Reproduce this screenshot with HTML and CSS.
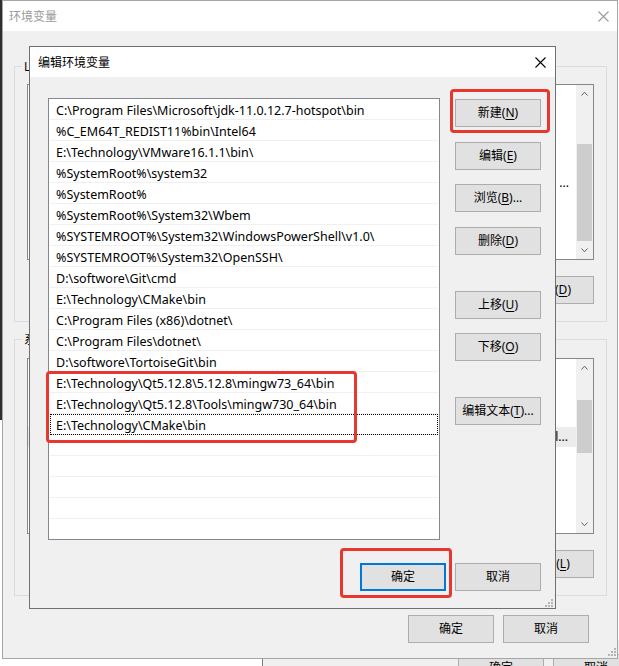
FILE: index.html
```html
<!DOCTYPE html>
<html lang="zh-CN">
<head>
<meta charset="utf-8">
<title>编辑环境变量</title>
<link rel="stylesheet" href="styles.css">
</head>
<body>
<div class="desk">
  <div class="edge-strip"></div>

  <div class="win back-win">
    <button class="btn">确定</button>
    <button class="btn">取消</button>
  </div>

  <div class="win outer-win">
    <div class="titlebar outer-title">
      <span>环境变量</span>
      <svg class="close-x" width="11" height="11" viewBox="0 0 11 11"><path d="M0.5 0.5L10.5 10.5M10.5 0.5L0.5 10.5" stroke="#9a9a9a" stroke-width="1.1" fill="none"/></svg>
    </div>
    <div class="outer-body">
      <div class="group">
        <div class="group-label">L</div>
        <div class="listview">
          <div class="lv-content">
            <div class="lv-header"></div>
            <div class="lv-row"></div>
            <div class="lv-row"></div>
            <div class="lv-row"></div>
            <div class="lv-row">...</div>
          </div>
          <div class="vscroll">
            <div class="sb-arrow"><svg width="7" height="5" viewBox="0 0 7 5"><path d="M0.5 4.5L3.5 1.2L6.5 4.5" stroke="#606060" fill="none"/></svg></div>
            <div class="sb-track"><div class="sb-thumb thumb-user"></div></div>
            <div class="sb-arrow"><svg width="7" height="5" viewBox="0 0 7 5"><path d="M0.5 0.5L3.5 3.8L6.5 0.5" stroke="#606060" fill="none"/></svg></div>
          </div>
        </div>
        <div class="group-actions">
          <button class="btn">删除(<u>D</u>)</button>
        </div>
      </div>

      <div class="group">
        <div class="group-label">系</div>
        <div class="listview lv-sys">
          <div class="lv-content">
            <div class="lv-header"></div>
            <div class="lv-row"></div>
            <div class="lv-row"></div>
            <div class="lv-row sel">l...</div>
          </div>
          <div class="vscroll">
            <div class="sb-arrow"><svg width="7" height="5" viewBox="0 0 7 5"><path d="M0.5 4.5L3.5 1.2L6.5 4.5" stroke="#606060" fill="none"/></svg></div>
            <div class="sb-track"><div class="sb-thumb thumb-sys"></div></div>
            <div class="sb-arrow"><svg width="7" height="5" viewBox="0 0 7 5"><path d="M0.5 0.5L3.5 3.8L6.5 0.5" stroke="#606060" fill="none"/></svg></div>
          </div>
        </div>
        <div class="group-actions">
          <button class="btn">删除(<u>L</u>)</button>
        </div>
      </div>

      <div class="outer-actions">
        <button class="btn">确定</button>
        <button class="btn">取消</button>
      </div>
    </div>
    <svg class="grip grip-outer" width="8" height="8" viewBox="0 0 8 8"><g fill="#b4b4b4"><rect x="6" y="0" width="2" height="2"/><rect x="3" y="3" width="2" height="2"/><rect x="6" y="3" width="2" height="2"/><rect x="0" y="6" width="2" height="2"/><rect x="3" y="6" width="2" height="2"/><rect x="6" y="6" width="2" height="2"/></g></svg>
  </div>

  <div class="win dialog">
    <div class="titlebar dlg-title">
      <span>编辑环境变量</span>
      <svg class="close-x" width="11" height="11" viewBox="0 0 11 11"><path d="M0.5 0.5L10.5 10.5M10.5 0.5L0.5 10.5" stroke="#000" stroke-width="1.1" fill="none"/></svg>
    </div>
    <div class="dlg-body">
      <div class="path-list">
        <div class="path-row">C:\Program Files\Microsoft\jdk-11.0.12.7-hotspot\bin</div>
        <div class="path-row">%C_EM64T_REDIST11%bin\Intel64</div>
        <div class="path-row">E:\Technology\VMware16.1.1\bin\</div>
        <div class="path-row">%SystemRoot%\system32</div>
        <div class="path-row">%SystemRoot%</div>
        <div class="path-row">%SystemRoot%\System32\Wbem</div>
        <div class="path-row">%SYSTEMROOT%\System32\WindowsPowerShell\v1.0\</div>
        <div class="path-row">%SYSTEMROOT%\System32\OpenSSH\</div>
        <div class="path-row">D:\softwore\Git\cmd</div>
        <div class="path-row">E:\Technology\CMake\bin</div>
        <div class="path-row">C:\Program Files (x86)\dotnet\</div>
        <div class="path-row">C:\Program Files\dotnet\</div>
        <div class="path-row">D:\softwore\TortoiseGit\bin</div>
        <div class="path-row">E:\Technology\Qt5.12.8\5.12.8\mingw73_64\bin</div>
        <div class="path-row">E:\Technology\Qt5.12.8\Tools\mingw730_64\bin</div>
        <div class="path-row focus">E:\Technology\CMake\bin</div>
        <div class="path-row"></div>
        <div class="path-row"></div>
        <div class="path-row"></div>
        <div class="path-row"></div>
        <div class="path-row"></div>
      </div>
      <div class="dlg-side">
        <button class="btn">新建(<u>N</u>)</button>
        <button class="btn">编辑(<u>E</u>)</button>
        <button class="btn">浏览(<u>B</u>)...</button>
        <button class="btn">删除(<u>D</u>)</button>
        <button class="btn gap-before">上移(<u>U</u>)</button>
        <button class="btn">下移(<u>O</u>)</button>
        <button class="btn gap-before">编辑文本(<u>T</u>)...</button>
      </div>
    </div>
    <div class="dlg-footer">
      <button class="btn btn-default">确定</button>
      <button class="btn">取消</button>
    </div>
    <svg class="grip grip-dlg" width="8" height="8" viewBox="0 0 8 8"><g fill="#b4b4b4"><rect x="6" y="0" width="2" height="2"/><rect x="3" y="3" width="2" height="2"/><rect x="6" y="3" width="2" height="2"/><rect x="0" y="6" width="2" height="2"/><rect x="3" y="6" width="2" height="2"/><rect x="6" y="6" width="2" height="2"/></g></svg>
  </div>

  <div class="mark mark-new"></div>
  <div class="mark mark-rows"></div>
  <div class="mark mark-ok"></div>
</div>
</body>
</html>
```
FILE: styles.css
```css
* { box-sizing: border-box; }
html, body { margin: 0; padding: 0; }
body {
  background: #fff;
  font-family: "Noto Sans", "Noto Sans CJK SC", sans-serif;
  font-size: 12px;
  color: #000;
  overflow: hidden;
}
.desk { position: relative; width: 619px; height: 666px; overflow: hidden; }
.edge-strip { position: absolute; left: 0; top: 0; width: 2px; height: 420px; background: #2f2f2f; }

.win { position: absolute; background: #f0f0f0; }

.back-win {
  left: 262px; top: 640px; width: 400px; height: 60px;
  border-left: 1px solid #7a7a7a;
  padding: 14px 0 0 195px;
  display: flex; gap: 9px; align-items: flex-start;
}

.outer-win { left: 2px; top: 0; width: 616px; height: 659px; border: 1px solid #a6a6a6; }
.titlebar {
  height: 30px; background: #fff;
  display: flex; align-items: center; justify-content: space-between;
}
.close-x { display: block; }
.outer-title { padding: 0 8px 0 6px; color: #9a9a9a; }
.outer-body { padding: 35px 10px 0 11px; }

.group { border: 1px solid #dcdcdc; padding: 0 12px 17px; }
.group + .group { margin-top: 17px; }
.group-label {
  width: fit-content; margin: -9px 0 0 -5px; padding: 0 2px;
  line-height: 17px; background: #f0f0f0;
}
.listview {
  margin-top: 9px; height: 176px;
  border: 1px solid #828790; background: #fff; display: flex;
}
.lv-sys { margin-top: 10px; }
.lv-content { flex: 1; overflow: hidden; }
.lv-header { height: 28px; }
.lv-row { height: 20px; line-height: 20px; text-align: right; padding-right: 7px; white-space: nowrap; }
.lv-row.sel { background: #ececec; padding-right: 8px; }
.vscroll { width: 17px; background: #f0f0f0; display: flex; flex-direction: column; }
.sb-arrow { height: 17px; display: flex; align-items: center; justify-content: center; }
.sb-track { flex: 1; }
.sb-thumb { margin: 0 1px; background: #cdcdcd; }
.thumb-user { margin-top: 42px; height: 97px; }
.thumb-sys { margin-top: 24px; height: 53px; }

.group-actions { margin-top: 16px; display: flex; justify-content: flex-end; gap: 9px; }
.outer-actions { margin: 19px 18px 0 0; display: flex; justify-content: flex-end; gap: 9px; }

.btn {
  width: 86px; height: 28px; padding: 0; margin: 0;
  border: 1px solid #adadad; background: #e1e1e1;
  font: inherit; color: #000; line-height: 26px; text-align: center;
  white-space: nowrap;
}
.btn u { text-underline-offset: 2px; }
.btn-default { border: 2px solid #0078d7; line-height: 24px; }

.grip { position: absolute; }
.grip-outer { right: 1px; bottom: 2px; }
.grip-dlg { right: 2px; bottom: 1px; }

.dialog { left: 29px; top: 46px; width: 527px; height: 563px; border: 1px solid #707070; }
.dlg-title { padding: 0 9px 0 8px; }
.dlg-body {
  padding: 21px 14px 0 18px;
  display: grid; grid-template-columns: 392px 86px; column-gap: 15px;
}
.path-list { height: 442px; border: 1px solid #828790; background: #fff; overflow: hidden; }
.path-row {
  height: 21px; margin: 0 1px; padding: 3px 0 0 6px;
  font-size: 12.5px; line-height: 17px;
  border-bottom: 1px solid #f0f0f0; white-space: nowrap;
}
.path-row.focus { outline: 1px dotted #000; outline-offset: -1px; }
.dlg-side { display: flex; flex-direction: column; gap: 14.5px; padding-top: 1px; }
.dlg-side .gap-before { margin-top: 21.5px; }
.dlg-footer { margin-top: 23px; padding-right: 14px; display: flex; justify-content: flex-end; gap: 9px; }

.mark { position: absolute; border: 3px solid #e8372f; border-radius: 4px; }
.mark-new { left: 450px; top: 89px; width: 100px; height: 44px; }
.mark-rows { left: 46px; top: 371px; width: 311px; height: 72px; }
.mark-ok { left: 340px; top: 548px; width: 112px; height: 50px; }
```
